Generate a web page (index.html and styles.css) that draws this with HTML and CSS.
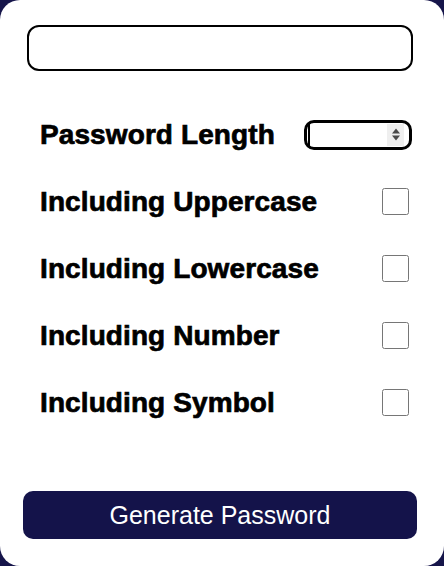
FILE: index.html
```html
<!DOCTYPE html>
<html>
<head>
<meta charset="utf-8">
<link rel="stylesheet" href="styles.css">
</head>
<body>
<div class="card">
  <input class="output" type="text">
  <div class="rows">
    <div class="row">
      <span class="label">Password Length</span>
      <div class="numwrap">
        <input class="num" type="number">
        <span class="caret"></span>
        <span class="spin">
          <svg width="10" height="15" viewBox="0 0 10 15"><path d="M1 6.5 L5 1.5 L9 6.5 Z M1 8.5 L5 13.5 L9 8.5 Z" fill="#4a4a4a"/></svg>
        </span>
      </div>
    </div>
    <div class="row">
      <span class="label">Including Uppercase</span>
      <input class="check" type="checkbox">
    </div>
    <div class="row">
      <span class="label">Including Lowercase</span>
      <input class="check" type="checkbox">
    </div>
    <div class="row">
      <span class="label">Including Number</span>
      <input class="check" type="checkbox">
    </div>
    <div class="row">
      <span class="label">Including Symbol</span>
      <input class="check" type="checkbox">
    </div>
  </div>
  <button class="generate">Generate Password</button>
</div>
</body>
</html>
```
FILE: styles.css
```css
html, body {
  margin: 0;
  padding: 0;
}
body {
  background: #16154a;
  width: 444px;
  height: 566px;
  overflow: hidden;
  font-family: "Liberation Sans", Arial, sans-serif;
}
.card {
  box-sizing: border-box;
  width: 444px;
  height: 566px;
  background: #ffffff;
  border-radius: 20px;
  padding: 25px 27px 0 23px;
  display: flex;
  flex-direction: column;
}
.output {
  box-sizing: border-box;
  margin: 0 4px 0 4px;
  height: 46px;
  border: 2px solid #000;
  border-radius: 12px;
  outline: none;
  background: #fff;
}
.rows {
  margin-top: 30px;
  padding: 0 5px 0 17px;
  display: flex;
  flex-direction: column;
}
.row {
  height: 67px;
  display: flex;
  align-items: center;
  justify-content: space-between;
}
.label {
  font-size: 28px;
  font-weight: 700;
  color: #000;
  -webkit-text-stroke: 0.7px #000;
  letter-spacing: 0.1px;
}
.numwrap {
  position: relative;
  width: 108px;
  height: 30px;
}
.num {
  box-sizing: border-box;
  width: 108px;
  height: 30px;
  margin: 0;
  border: 3px solid #000;
  border-radius: 10px;
  outline: none;
}
.caret {
  position: absolute;
  left: 4px;
  top: 4px;
  width: 2px;
  height: 22px;
  background: #000;
}
.spin {
  position: absolute;
  right: 8px;
  top: 4px;
  width: 17px;
  height: 22px;
  background: #efefef;
  display: flex;
  align-items: center;
  justify-content: center;
}
.check {
  width: 27px;
  height: 27px;
  margin: 0 3px 0 0;
}
.generate {
  margin-top: 55px;
  height: 48px;
  width: 394px;
  background: #14134a;
  color: #fff;
  border: none;
  border-radius: 10px;
  font-family: "Liberation Sans", Arial, sans-serif;
  font-size: 25px;
}
```
